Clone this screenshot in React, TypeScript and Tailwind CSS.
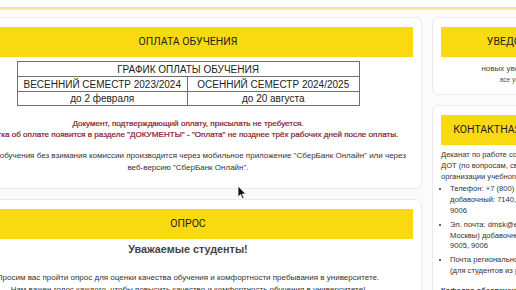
const Header = ({ title }: { title: string }) => (
  <div className="h-[30px] bg-[#f9d90f] flex items-center justify-center text-[10.5px] text-[#1f1f1f] font-['Roboto',Arial,sans-serif] whitespace-nowrap">
    {title}
  </div>
);

const PaymentCard = () => (
  <div className="bg-white border border-[#ebebeb] rounded-[6px] pt-[9px] px-[8px] pb-[14px]">
    <Header title="ОПЛАТА ОБУЧЕНИЯ" />
    <div className="mt-[4px] mx-auto w-[343px] border border-[#707070] text-[#222] text-center">
      <div className="h-[15px] leading-[15px] text-[10px] border-b border-[#707070]">
        ГРАФИК ОПЛАТЫ ОБУЧЕНИЯ
      </div>
      <div className="grid grid-cols-2 h-[15px] leading-[15px] text-[10px] border-b border-[#707070]">
        <div className="border-r border-[#707070]">ВЕСЕННИЙ СЕМЕСТР 2023/2024</div>
        <div>ОСЕННИЙ СЕМЕСТР 2024/2025</div>
      </div>
      <div className="grid grid-cols-2 h-[13px] leading-[13px] text-[10px]">
        <div className="border-r border-[#707070]">до 2 февраля</div>
        <div>до 20 августа</div>
      </div>
    </div>
    <div className="mt-[12px] text-center text-[8.1px] leading-[11px] text-[#86162c] [-webkit-text-stroke:0.2px_#86162c] whitespace-nowrap">
      <p>Документ, подтверждающий оплату, присылать не требуется.</p>
      <p>Отметка об оплате появится в разделе "ДОКУМЕНТЫ" - "Оплата" не позднее трёх рабочих дней после оплаты.</p>
    </div>
    <div className="mt-[10px] text-center text-[8px] leading-[12px] text-[#333] whitespace-nowrap">
      <p>Оплата обучения без взимания комиссии производится через мобильное приложение "СберБанк Онлайн" или через</p>
      <p>веб-версию "СберБанк Онлайн".</p>
    </div>
  </div>
);

const SurveyCard = () => (
  <div className="bg-white border border-[#ebebeb] rounded-[6px] pt-[9px] px-[8px] pb-[14px]">
    <Header title="ОПРОС" />
    <h3 className="mt-[2px] text-center text-[10.8px] leading-[16px] font-bold text-[#444]">Уважаемые студенты!</h3>
    <div className="mt-[15px] text-center text-[8px] leading-[12px] text-[#333] whitespace-nowrap">
      <p>Просим вас пройти опрос для оценки качества обучения и комфортности пребывания в университете.</p>
      <p>Нам важен голос каждого, чтобы повысить качество и комфортность обучения в университете!</p>
    </div>
  </div>
);

const NoticeCard = () => (
  <div className="bg-white border border-[#ebebeb] rounded-[6px] pt-[9px] px-[8px] pb-[9px] text-center whitespace-nowrap">
    <Header title="УВЕДОМЛЕНИЯ" />
    <p className="mt-[6px] text-[8px] leading-[11px] text-[#444]">новых уведомлений нет</p>
    <p className="mt-[1px] text-[6.5px] leading-[10px] text-[#555]">все уведомления</p>
  </div>
);

const ContactCard = () => (
  <div className="bg-white border border-[#ebebeb] rounded-[6px] pt-[9px] px-[8px] pb-[10px] whitespace-nowrap text-[#333] text-[7.6px] leading-[10.8px]">
    <Header title="КОНТАКТНАЯ ИНФОРМАЦИЯ" />
    <div className="mt-[5px]">
      <p>Деканат по работе со студентами, обучающимися с</p>
      <p>ДОТ (по вопросам, связанным с организацией</p>
      <p>организации учебного процесса):</p>
    </div>
    <ul className="mt-[2px] pl-[9px] list-disc flex flex-col gap-[3px]">
      <li>
        <p>Телефон: +7 (800) 301-65-65</p>
        <p>добавочный: 7140, 7010, 9005,</p>
        <p>9006</p>
      </li>
      <li>
        <p>Эл. почта: dmsk@ex-moscow.ru (для</p>
        <p>Москвы) добавочный: 7140, 7010,</p>
        <p>9005, 9006</p>
      </li>
      <li>
        <p>Почта регионального деканата</p>
        <p>(для студентов из регионов)</p>
      </li>
    </ul>
    <p className="mt-[9px] font-bold">Кафедра обеспечения учебного процесса</p>
  </div>
);

const Cursor = () => (
  <svg className="absolute left-[237px] top-[185px]" width="10" height="15" viewBox="0 0 10 15">
    <path d="M1 1 L1 12 L3.6 9.6 L5.6 14 L7.2 13.3 L5.3 9 L8.8 9 Z" fill="#111" stroke="#fff" strokeWidth="0.8" />
  </svg>
);

export default function App() {
  return (
    <div className="relative w-[516px] h-[290px] overflow-hidden bg-[#fbfbfb] font-['Liberation_Sans',Arial,sans-serif]">
      <div className="h-[10px] bg-white border-b-2 border-[#f6e9a4] shadow-[0_-1px_0_#efd8d4_inset]" />
      <div className="flex gap-[10px] ml-[-46px] pt-[7px]">
        <div className="w-[468px] shrink-0 flex flex-col gap-[10px]">
          <PaymentCard />
          <SurveyCard />
        </div>
        <div className="w-[188px] shrink-0 flex flex-col gap-[10px]">
          <NoticeCard />
          <ContactCard />
        </div>
      </div>
      <Cursor />
    </div>
  );
}
